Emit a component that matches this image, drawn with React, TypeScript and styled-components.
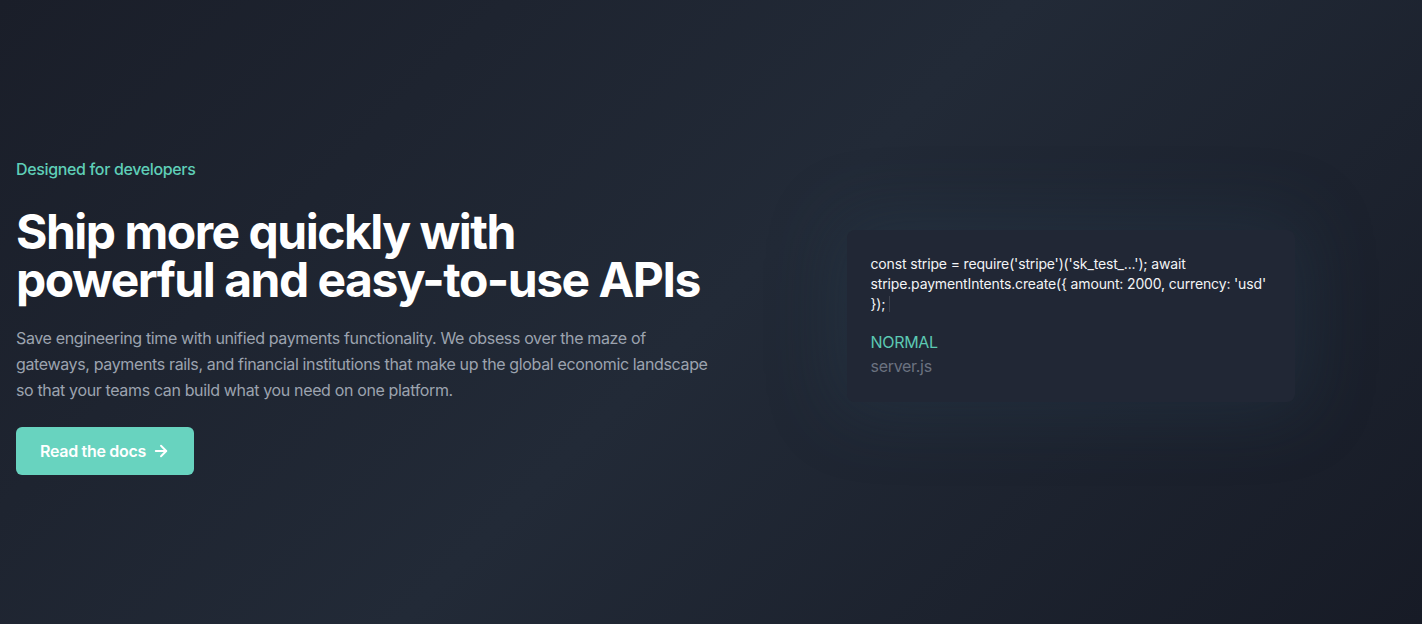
import React from "react";
import styled, { createGlobalStyle } from "styled-components";
import { ArrowRight } from "lucide-react";

const GlobalStyle = createGlobalStyle`
  * { box-sizing: border-box; }
  html, body { margin: 0; padding: 0; }
  body {
    font-family: Inter, "Noto Sans", "Liberation Sans", sans-serif;
    background: #1b202b;
    -webkit-font-smoothing: antialiased;
  }
`;

const Page = styled.section`
  min-height: 624px;
  padding: 8px 16px 0;
  display: grid;
  grid-template-columns: 719px 1fr;
  align-items: center;
  background: linear-gradient(135deg, #1a1e29 0%, #222a37 50%, #171b26 100%);
`;

const Intro = styled.div`
  display: flex;
  flex-direction: column;
  align-items: flex-start;
`;

const Eyebrow = styled.p`
  margin: 0;
  font-size: 16px;
  line-height: 24px;
  font-weight: 500;
  letter-spacing: -0.35px;
  color: #5fcfb8;
`;

const Title = styled.h1`
  margin: 27px 0 0;
  font-size: 48px;
  line-height: 48px;
  font-weight: 700;
  letter-spacing: -1.5px;
  color: #ffffff;
`;

const Lead = styled.p`
  margin: 21px 0 0;
  max-width: 700px;
  font-size: 16px;
  line-height: 26px;
  letter-spacing: -0.36px;
  color: #9ca3af;
`;

const Button = styled.a`
  margin-top: 24px;
  display: inline-flex;
  align-items: center;
  gap: 6px;
  padding: 12px 24px;
  border-radius: 6px;
  background: #68d3bf;
  color: #ffffff;
  font-size: 16px;
  line-height: 24px;
  font-weight: 600;
  letter-spacing: -0.3px;
  text-decoration: none;
`;

const CodeColumn = styled.div`
  display: flex;
  justify-content: center;
`;

const CodeCard = styled.div`
  width: 448px;
  padding: 24px;
  border-radius: 8px;
  background: #212735;
  box-shadow: 0 0 70px 10px rgba(44, 70, 88, 0.3);
`;

const Code = styled.p`
  margin: 0;
  font-size: 14px;
  line-height: 20px;
  letter-spacing: -0.15px;
  color: #f3f4f6;
`;

const Caret = styled.span`
  display: inline-block;
  width: 1px;
  height: 16px;
  margin-left: 4px;
  vertical-align: -3px;
  background: rgba(255, 255, 255, 0.12);
`;

const Meta = styled.div`
  margin-top: 16px;
  display: flex;
  flex-direction: column;
`;

const MetaLine = styled.span<{ $accent?: boolean }>`
  font-size: 16px;
  line-height: 24px;
  letter-spacing: -0.3px;
  color: ${(p) => (p.$accent ? "#5cc9b3" : "#6b7280")};
`;

export default function App() {
  return (
    <>
      <GlobalStyle />
      <Page>
        <Intro>
          <Eyebrow>Designed for developers</Eyebrow>
          <Title>
            Ship more quickly with
            <br />
            powerful and easy-to-use APIs
          </Title>
          <Lead>
            Save engineering time with unified payments functionality. We obsess over the maze of
            gateways, payments rails, and financial institutions that make up the global economic
            landscape so that your teams can build what you need on one platform.
          </Lead>
          <Button href="#">
            Read the docs
            <ArrowRight size={18} strokeWidth={2.5} />
          </Button>
        </Intro>
        <CodeColumn>
          <CodeCard>
            <Code>
              const stripe = require('stripe')('sk_test_...'); await
              stripe.paymentIntents.create({"{"} amount: 2000, currency: 'usd' {"}"});
              <Caret />
            </Code>
            <Meta>
              <MetaLine $accent>NORMAL</MetaLine>
              <MetaLine>server.js</MetaLine>
            </Meta>
          </CodeCard>
        </CodeColumn>
      </Page>
    </>
  );
}
